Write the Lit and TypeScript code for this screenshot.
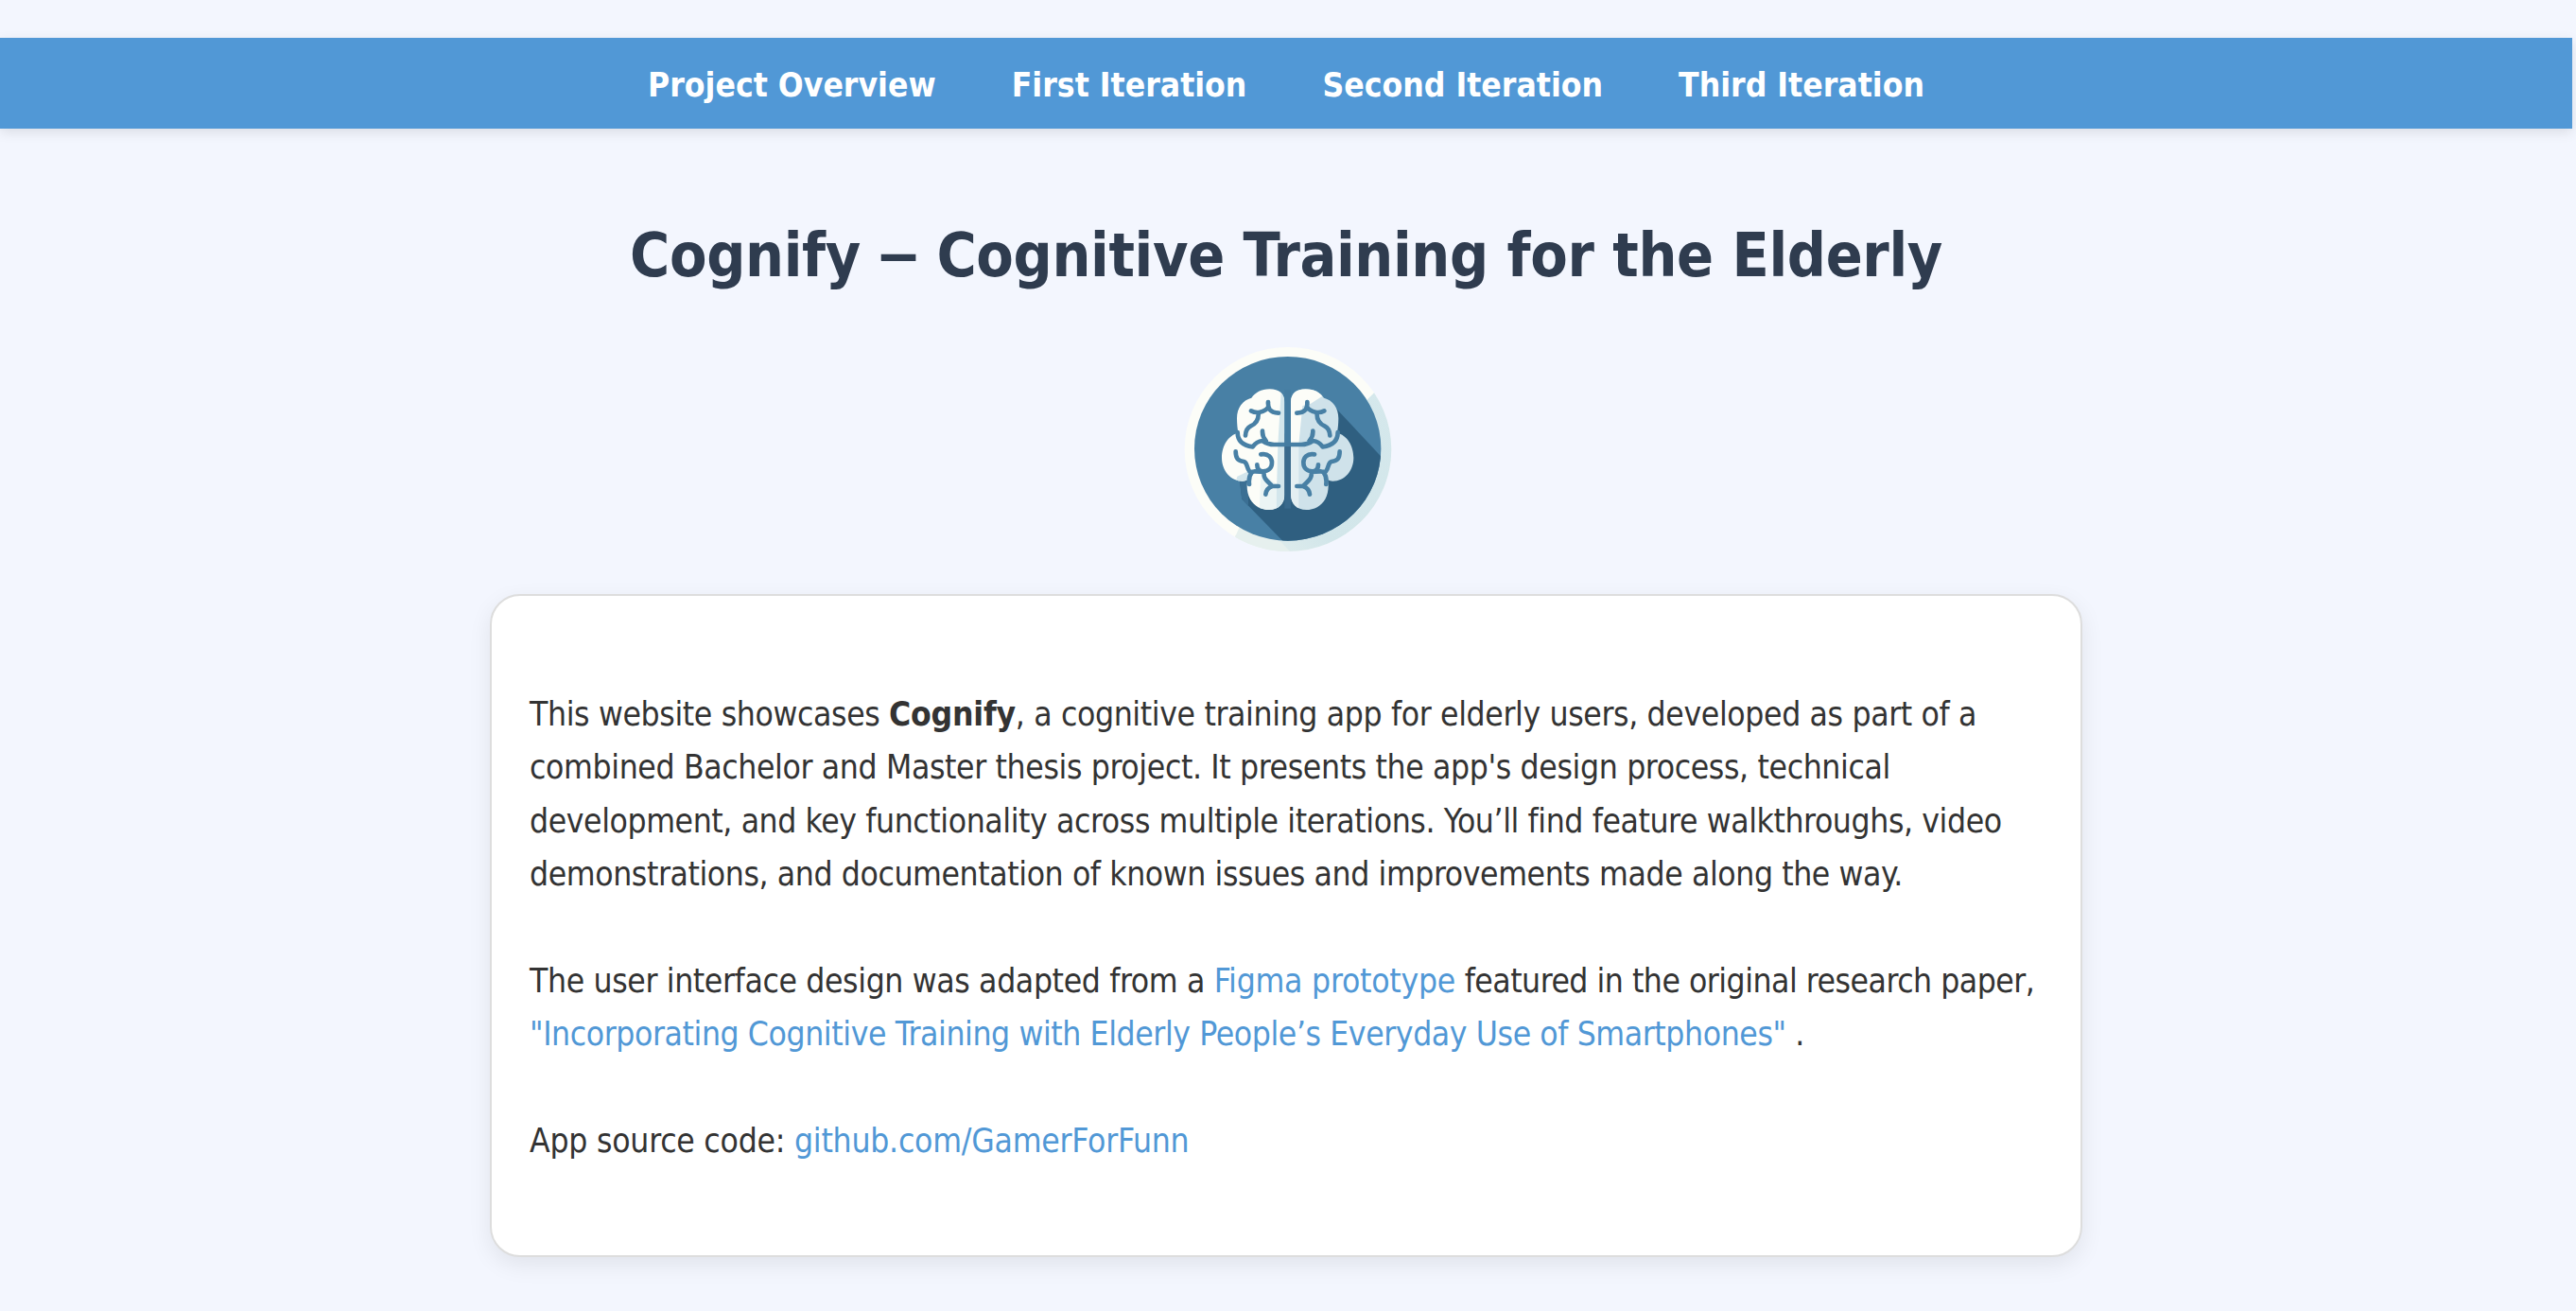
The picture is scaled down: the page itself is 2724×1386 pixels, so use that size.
import { LitElement, html, svg, css } from "lit";
import { customElement } from "lit/decorators.js";

const NAV_ITEMS = ["Project Overview", "First Iteration", "Second Iteration", "Third Iteration"];

// Left half of the brain; the right half mirrors it around x = 365.
const LOBES =
  "M355 210 C355 184 338 169 308 169 C280 169 263 180 250 197 C222 204 204 228 204 262 C204 280 206 296 208 308 C178 314 156 348 156 387 C156 428 184 461 222 461 C228 461 233 459 238 457 C234 478 236 500 246 518 C258 540 282 552 306 552 C336 552 355 532 355 504 Z";
const FOLDS =
  "M249 238 Q262 245 277 242 Q296 238 303 226 M303 210 Q302 226 308 234 Q316 244 336 245 M272 243 C274 268 262 280 248 286 Q232 294 231 316 " +
  "M206 306 C206 334 222 348 254 352 Q266 335 285 333 Q302 345 322 345 H366 M285 302 Q284 320 296 333 " +
  "M200 367 C200 390 208 397 226 399 C238 402 234 420 244 430 Q246 434 262 430 L290 432 M252 432 Q240 446 243 471 " +
  "M280 376 C304 372 315 386 315 402 C315 420 303 430 287 430 C274 430 268 422 268 409 M290 430 C286 456 304 462 316 477 H336 M316 477 Q297 484 295 503";

const folds = () => svg`
  <path d=${FOLDS} fill="none" stroke="#4880a5" stroke-width="14" stroke-linecap="round" stroke-linejoin="round"></path>`;

const lobes = (base: string, tint: string, area: string) => svg`
  <path d=${LOBES} fill=${base}></path>
  <g clip-path="url(#lobes)"><path d=${area} fill=${tint}></path></g>`;

@customElement("brain-logo")
export class BrainLogo extends LitElement {
  static styles = css`
    :host { display: block; }
    .logo { display: block; width: 230px; height: 220px; }
  `;

  render() {
    return html`<svg class="logo" viewBox="15 30 690 660" aria-hidden="true">
      <defs>
        <clipPath id="lobes"><path d=${LOBES}></path></clipPath>
        <clipPath id="ring"><ellipse cx="366" cy="360" rx="328" ry="324"></ellipse></clipPath>
        <clipPath id="disc"><ellipse cx="365" cy="358" rx="296" ry="292"></ellipse></clipPath>
        <linearGradient id="rim" x1="0" y1="1" x2="1" y2="0">
          <stop offset="0" stop-color="#e8f1ef"></stop>
          <stop offset=".35" stop-color="#d2e6ea"></stop>
          <stop offset="1" stop-color="#d5e8ec"></stop>
        </linearGradient>
      </defs>
      <g clip-path="url(#ring)">
        <rect x="30" y="30" width="670" height="660" fill="#fcfdf8"></rect>
        <path d="M615 205 L640 180 H710 V700 H180 L200 634 Z" fill="url(#rim)"></path>
        <path d="M200 634 L215 600 L330 640 L378 690 H180 Z" fill="#e6f0ee"></path>
      </g>
      <g clip-path="url(#disc)">
        <rect x="60" y="60" width="620" height="600" fill="#4880a5"></rect>
        <path d="M520 232 L690 414 V670 H368 L220 518 L213 460 L365 300 Z" fill="#2f5f80"></path>
        <path d="M213 460 L240 455 L240 540 L219 516 Z" fill="#3b6f93"></path>
      </g>
      ${lobes("#fcfdf8", "#d3e6ec", "M345 160 L334 345 L328 560 H360 V160 Z M205 446 L240 430 V465 H200 Z")}
      <g clip-path="url(#lobes)">
        <path d="M280 436 L275 560 H330 V470 Z" fill="#e6f1f2" opacity=".8"></path>
      </g>
      ${folds()}
      <g transform="matrix(-1 0 0 1 730 0)">
        ${lobes("#cfe2ea", "#fcfdf8", "M360 160 H262 L256 192 L292 215 L318 222 L330 345 H360 Z")}
        <g clip-path="url(#lobes)">
          <path d="M330 345 L330 560 H360 V345 Z" fill="#e4eff2"></path>
        </g>
        ${folds()}
      </g>
      <rect x="355" y="172" width="20" height="180" fill="#447ca1"></rect>
      <rect x="355" y="352" width="20" height="196" fill="#38698c"></rect>
    </svg>`;
  }
}

@customElement("app-root")
export class AppRoot extends LitElement {
  static styles = css`
    :host {
      display: block;
      box-sizing: border-box;
      height: 1386px;
      padding: 40px 4px 0 0;
      overflow: hidden;
      background: #f3f6fe;
      color: #333;
      font-family: "DejaVu Sans Condensed", "DejaVu Sans", sans-serif;
      font-size: 35.2px;
    }
    .nav {
      display: flex;
      justify-content: center;
      gap: 80px;
      box-sizing: border-box;
      height: 96px;
      padding-top: 4px;
      line-height: 92px;
      background: #5198d6;
      box-shadow: 0 4px 12px rgba(0, 0, 0, 0.1);
    }
    .nav-link {
      color: #fff;
      font-weight: bold;
      text-decoration: none;
      white-space: nowrap;
    }
    .page {
      display: flex;
      flex-direction: column;
      align-items: center;
    }
    .title {
      margin: 83px 0 44px;
      color: #2f3c4f;
      font-size: 64px;
      line-height: 102px;
      letter-spacing: -0.35px;
      white-space: nowrap;
    }
    .dash {
      font-family: "Liberation Sans", sans-serif;
      font-size: 74px;
      line-height: 0;
      letter-spacing: 0;
    }
    .card {
      box-sizing: border-box;
      width: 1684px;
      height: 701px;
      margin-top: 43px;
      padding: 40px;
      border: 2px solid #ddd;
      border-radius: 32px;
      background: #fff;
      box-shadow: 0 8px 24px rgba(0, 0, 0, 0.08);
    }
    .text {
      margin: 57px 0 0;
      line-height: 56.32px;
      letter-spacing: -0.37px;
      white-space: nowrap;
    }
    .snug { letter-spacing: -0.41px; }
    .tight { letter-spacing: -0.5px; }
    .loose { letter-spacing: -0.24px; }
    .link {
      color: #5198d6;
      text-decoration: none;
    }
  `;

  render() {
    return html`
      <nav class="nav">${NAV_ITEMS.map((item) => html`<a class="nav-link" href="#">${item}</a>`)}</nav>
      <main class="page">
        <h1 class="title">Cognify <span class="dash">–</span> Cognitive Training for the Elderly</h1>
        <brain-logo></brain-logo>
        <section class="card">
          <p class="text">
            This website showcases <b class="loose">Cognify</b>, a cognitive training app for elderly users, developed as part of a<br />
            combined Bachelor and Master thesis project. It presents the app's design process, technical<br />
            <span class="snug">development, and key functionality across multiple iterations. You’ll find feature walkthroughs, video</span><br />
            <span class="snug">demonstrations, and documentation of known issues and improvements made along the way.</span><br />
            <br />
            The user interface design was adapted from a
            <a class="link loose" href="#">Figma prototype</a><span class="tight"> featured in the original research paper,</span><br />
            <a class="link snug" href="#">"Incorporating Cognitive Training with Elderly People’s Everyday Use of Smartphones"</a> .<br />
            <br />
            <span class="loose">App source code: <a class="link" href="#">github.com/GamerForFunn</a></span>
          </p>
        </section>
      </main>
    `;
  }
}
